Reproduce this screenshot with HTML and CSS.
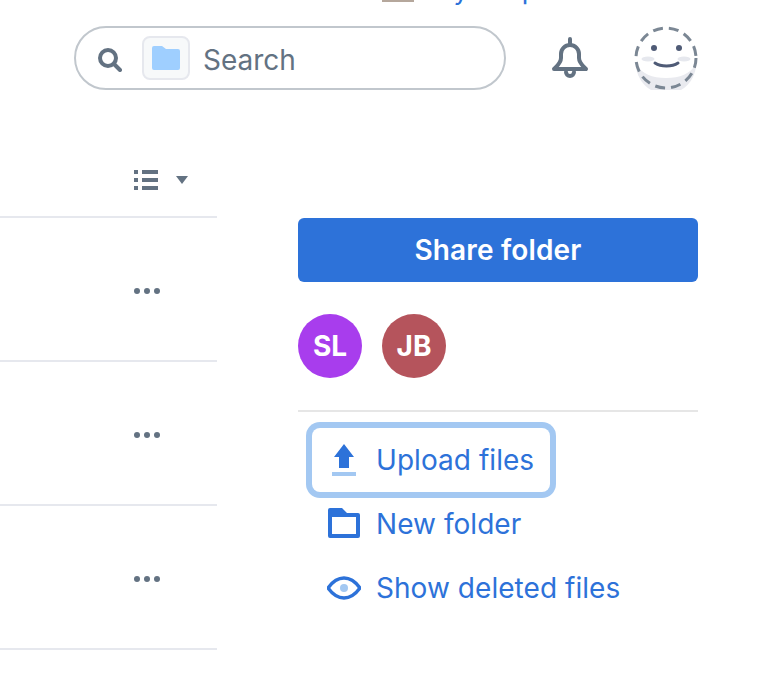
FILE: index.html
```html
<!DOCTYPE html>
<html lang="en">
<head>
<meta charset="utf-8">
<title>Dropbox</title>
<link rel="stylesheet" href="styles.css">
</head>
<body>
<div class="promo">
  <span class="promo-icon"></span>
  <span class="promo-text">Try Dropbox Business</span>
</div>
<header class="header">
  <div class="search">
    <svg class="search-icon" width="24" height="24" viewBox="0 0 24 24"><circle cx="10" cy="10" r="8" fill="none" stroke="#637282" stroke-width="4"/><path d="M16 16 22 22" stroke="#637282" stroke-width="4" stroke-linecap="round"/></svg>
    <span class="scope"><svg width="28" height="24" viewBox="0 0 28 24"><path d="M0 2a2 2 0 0 1 2-2h8l4 3h12a2 2 0 0 1 2 2v17a2 2 0 0 1-2 2H2a2 2 0 0 1-2-2z" fill="#9fcfff"/></svg></span>
    <span class="search-label">Search</span>
  </div>
  <svg class="bell" width="40" height="44" viewBox="0 0 40 44"><path d="M20 3v4M11 18a9 9 0 0 1 18 0v4c0 5 4 8 7 11H4c3-3 7-6 7-11zM16 36a4 4 0 0 0 8 0" fill="none" stroke="#637282" stroke-width="4" stroke-linecap="round" stroke-linejoin="round"/></svg>
  <svg class="face" width="64" height="64" viewBox="0 0 64 64">
    <path d="M2 38a30 30 0 0 0 60 0c-6 10-16 14-30 14S8 48 2 38z" fill="#e9eaef"/>
    <circle cx="32" cy="32" r="30" fill="none" stroke="#7b8794" stroke-width="3" stroke-dasharray="10 6"/>
    <circle cx="20" cy="22" r="3" fill="#4f5b76"/><circle cx="45" cy="22" r="3" fill="#4f5b76"/>
    <ellipse cx="14" cy="33" rx="6.500" ry="2.500" fill="#e6e8ee"/><ellipse cx="50" cy="33" rx="6.500" ry="2.500" fill="#e6e8ee"/>
    <path d="M21 37c6 4 17 4 23 0" fill="none" stroke="#4f5b76" stroke-width="3" stroke-linecap="round"/>
  </svg>
</header>
<main class="main">
  <section class="files">
    <div class="toolbar">
      <svg width="24" height="20" viewBox="0 0 24 20"><path d="M0 0h4v4H0zM8 0h16v4H8zM0 8h4v4H0zM8 8h16v4H8zM0 16h4v4H0zM8 16h16v4H8z" fill="#637282"/></svg>
      <svg class="caret" width="12" height="8" viewBox="0 0 12 8"><path d="M0 0h12L6 8z" fill="#637282"/></svg>
    </div>
    <div class="row"><svg width="28" height="6" viewBox="0 0 28 6"><circle cx="3" cy="3" r="3" fill="#637282"/><circle cx="13" cy="3" r="3" fill="#637282"/><circle cx="23" cy="3" r="3" fill="#637282"/></svg></div>
    <div class="row"><svg width="28" height="6" viewBox="0 0 28 6"><circle cx="3" cy="3" r="3" fill="#637282"/><circle cx="13" cy="3" r="3" fill="#637282"/><circle cx="23" cy="3" r="3" fill="#637282"/></svg></div>
    <div class="row"><svg width="28" height="6" viewBox="0 0 28 6"><circle cx="3" cy="3" r="3" fill="#637282"/><circle cx="13" cy="3" r="3" fill="#637282"/><circle cx="23" cy="3" r="3" fill="#637282"/></svg></div>
  </section>
  <aside class="side">
    <button class="share">Share folder</button>
    <div class="members">
      <span class="avatar avatar-sl">SL</span>
      <span class="avatar avatar-jb">JB</span>
    </div>
    <nav class="actions">
      <a class="action action-focus">
        <svg class="action-icon" width="34" height="36" viewBox="0 0 34 36"><path d="M17 2 27 15h-5v11H12V15H7z" fill="#2d72d9"/><path d="M5 30h24v4H5z" fill="#a3c8f2"/></svg>
        <span>Upload files</span>
      </a>
      <a class="action">
        <svg class="action-icon" width="34" height="32" viewBox="0 0 34 32"><path fill-rule="evenodd" d="M1 2a2 2 0 0 1 2-2h12l5 5h11a2 2 0 0 1 2 2v21a2 2 0 0 1-2 2H3a2 2 0 0 1-2-2zM5 9v17h24V9z" fill="#2d72d9"/></svg>
        <span>New folder</span>
      </a>
      <a class="action">
        <svg class="action-icon" width="34" height="24" viewBox="0 0 34 24"><path d="M1 12C6 5 11 2 17 2s11 3 16 10c-5 7-10 10-16 10S6 19 1 12z" fill="none" stroke="#2d72d9" stroke-width="3.500" stroke-linejoin="round"/><circle cx="17" cy="12" r="4" fill="#a3c8f2"/></svg>
        <span>Show deleted files</span>
      </a>
    </nav>
  </aside>
</main>
</body>
</html>
```
FILE: styles.css
```css
* { box-sizing: border-box; }
html, body { margin: 0; padding: 0; }
body {
  width: 758px;
  height: 680px;
  overflow: hidden;
  background: #fff;
  font-family: "Inter", "Liberation Sans", sans-serif;
}
.promo {
  height: 5px;
  padding-left: 382px;
  display: flex;
  align-items: flex-end;
  gap: 13px;
  overflow: hidden;
}
.promo-icon {
  flex: none;
  width: 32px;
  height: 2px;
  margin-bottom: 3px;
  background: #b5a79c;
}
.promo-text {
  flex: none;
  font-size: 27px;
  line-height: 32px;
  margin-bottom: -1px;
  color: #2d72d9;
  white-space: nowrap;
}
.header {
  height: 64px;
  margin-top: 21px;
  padding-left: 74px;
  display: flex;
  align-items: center;
}
.search {
  width: 432px;
  height: 64px;
  border: 2px solid #c1c7cd;
  border-radius: 32px;
  padding-left: 22px;
  display: flex;
  align-items: center;
}
.search-icon { flex: none; margin-top: 4px; }
.scope {
  flex: none;
  width: 48px;
  height: 44px;
  margin-left: 20px;
  border: 2px solid #e6e8ee;
  border-radius: 8px;
  background: #f7f9fa;
  display: flex;
  align-items: center;
  justify-content: center;
}
.search-label {
  margin: 4px 0 0 13px;
  font-size: 28px;
  color: #637282;
}
.bell { flex: none; margin-left: 44px; }
.face { flex: none; margin-left: 44px; }
.main {
  display: flex;
  height: 590px;
}
.files { width: 217px; flex: none; }
.toolbar {
  height: 128px;
  padding: 80px 29px 0 134px;
  display: flex;
  align-items: flex-start;
  justify-content: space-between;
  border-bottom: 2px solid #e6e8ee;
}
.caret { margin-top: 6px; }
.row {
  height: 144px;
  padding: 70px 0 0 134px;
  border-bottom: 2px solid #e6e8ee;
}
.row svg { display: block; }
.side {
  width: 400px;
  margin-left: 81px;
  padding-top: 128px;
  flex: none;
}
.share {
  display: block;
  width: 100%;
  height: 64px;
  border: 0;
  border-radius: 6px;
  background: #2d72d9;
  color: #fff;
  font: 600 28px "Inter", "Liberation Sans", sans-serif;
  letter-spacing: 0.15px;
}
.members {
  display: flex;
  gap: 20px;
  padding: 32px 0;
  border-bottom: 2px solid #e6e6e6;
}
.avatar {
  width: 64px;
  height: 64px;
  border-radius: 50%;
  display: flex;
  align-items: center;
  justify-content: center;
  color: #fff;
  font-size: 28px;
  font-weight: 700;
}
.avatar-sl { background: #a83ded; }
.avatar-jb { background: #b5545c; }
.actions {
  display: flex;
  flex-direction: column;
  align-items: flex-start;
  padding-top: 16px;
}
.action {
  height: 64px;
  margin-left: 14px;
  padding-left: 15px;
  display: flex;
  align-items: center;
  color: #2d72d9;
  font-size: 28px;
  letter-spacing: 0.05px;
  white-space: nowrap;
}
.action-focus {
  width: 238px;
  border-radius: 8px;
  box-shadow: 0 0 0 6px #a3c8f2;
}
.action-icon { flex: none; margin-right: 15px; }
```
